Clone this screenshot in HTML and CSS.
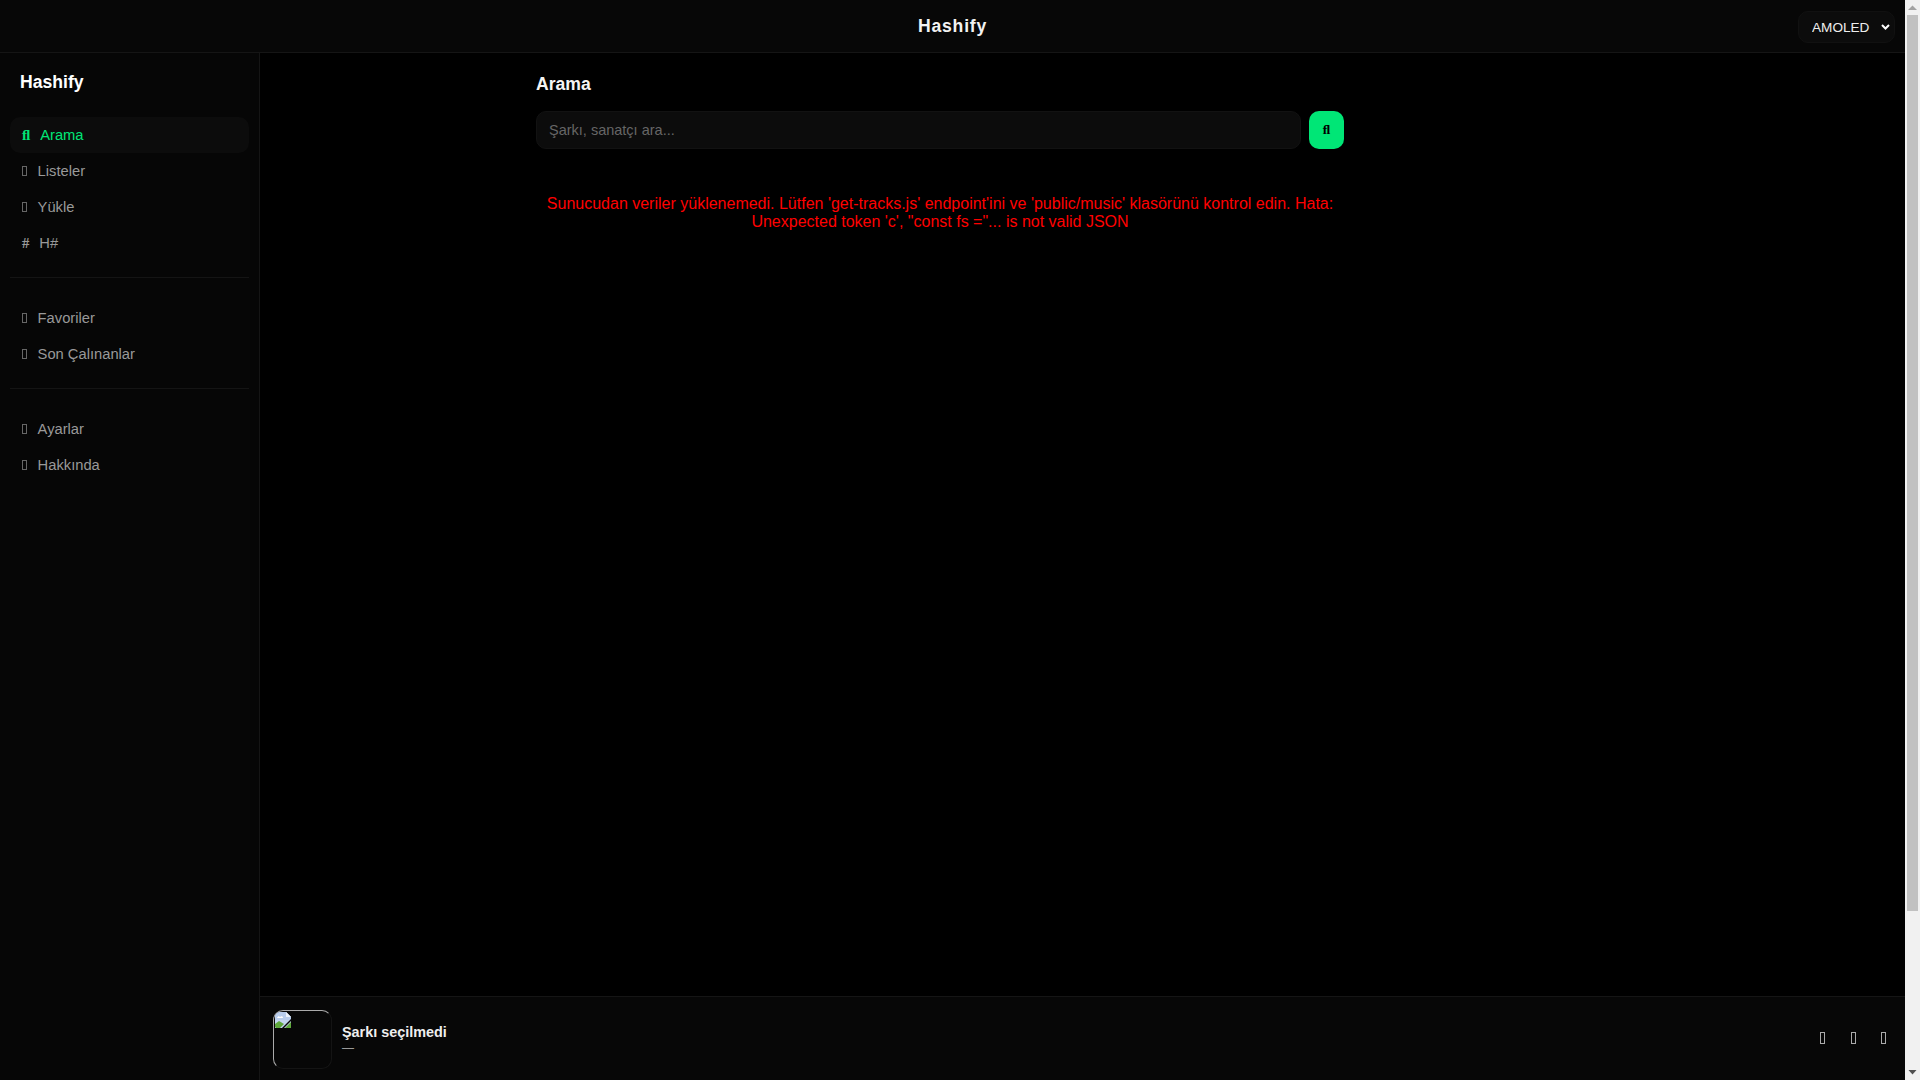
FILE: index.html
```html
<!DOCTYPE html>
<html lang="tr">
<head>
<meta charset="utf-8">
<title>Hashify</title>
<link rel="stylesheet" href="styles.css">
</head>
<body>
<header class="topbar">
  <div class="brand-center">Hashify</div>
  <select class="theme-select"><option>AMOLED</option></select>
</header>
<div class="shell">
  <aside class="sidebar">
    <h2 class="side-title">Hashify</h2>
    <nav class="nav-group">
      <a class="nav-item active"><i class="ico">ﬂ</i>Arama</a>
      <a class="nav-item"><i class="tofu"></i>Listeler</a>
      <a class="nav-item"><i class="tofu"></i>Yükle</a>
      <a class="nav-item"><i class="ico">#</i>H#</a>
    </nav>
    <nav class="nav-group">
      <a class="nav-item"><i class="tofu"></i>Favoriler</a>
      <a class="nav-item"><i class="tofu"></i>Son Çalınanlar</a>
    </nav>
    <nav class="nav-group last">
      <a class="nav-item"><i class="tofu"></i>Ayarlar</a>
      <a class="nav-item"><i class="tofu"></i>Hakkında</a>
    </nav>
  </aside>
  <div class="main-col">
    <main class="content">
      <section class="panel">
        <h3 class="panel-title">Arama</h3>
        <div class="search-row">
          <input class="search-input" type="text" placeholder="Şarkı, sanatçı ara...">
          <button class="search-btn"><i class="ico-btn">ﬂ</i></button>
        </div>
        <p class="error-msg">Sunucudan veriler yüklenemedi. Lütfen 'get-tracks.js' endpoint'ini ve 'public/music' klasörünü kontrol edin. Hata: Unexpected token 'c', "const fs ="... is not valid JSON</p>
      </section>
    </main>
    <footer class="player">
      <div class="cover">
        <svg class="broken" width="16" height="16" viewBox="0 0 16 16">
          <path d="M0 0h11l5 5v11H0z" fill="#c3d5ef"/>
          <path d="M0 0h11l5 5v3H0z" fill="#b9cdec"/>
          <path d="M2 6c1-2 2-2 3-1 1-1 3-1 3 1z" fill="#fff"/>
          <path d="M0 15v-3l4-3 5 3-4 4H1z" fill="#5fa83c"/>
          <path d="M10 16l6-6v6z" fill="#5fa83c"/>
          <path d="M16 7L7 16h2l7-7z" fill="#070707"/>
          <path d="M11 0l5 5h-5z" fill="#eef3fb"/>
        </svg>
      </div>
      <div class="track">
        <div class="track-title">Şarkı seçilmedi</div>
        <div class="track-artist">—</div>
      </div>
      <div class="controls">
        <button class="ctl"></button>
        <button class="ctl"></button>
        <button class="ctl"></button>
      </div>
    </footer>
  </div>
</div>
<div class="scrollbar" aria-hidden="true">
  <svg class="sb-arrow" width="15" height="15" viewBox="0 0 15 15"><path d="M3 10l4.500-4.500L12 10z" fill="#a3a3a3"/></svg>
  <div class="sb-track"><div class="sb-thumb"></div></div>
  <svg class="sb-arrow" width="15" height="15" viewBox="0 0 15 15"><path d="M3.500 5h8l-4 4.500z" fill="#505050"/></svg>
</div>
</body>
</html>
```
FILE: styles.css
```css
* { box-sizing: border-box; }
body { margin: 0; padding-right: 15px; background: #000; color: #fff; font-family: "Liberation Sans", Arial, sans-serif; font-size: 16px; }
.topbar { height: 53px; background: #070707; border-bottom: 1px solid #151515; display: flex; align-items: center; justify-content: center; position: relative; }
.brand-center { font-size: 17.6px; font-weight: 700; letter-spacing: 0.8px; color: #f2f2f2; }
.theme-select { position: absolute; right: 10px; top: 11px; width: 97px; height: 32px; padding: 0 12px 0 13px; appearance: none; background: #0c0c0c url("data:image/svg+xml,%3Csvg xmlns='http://www.w3.org/2000/svg' width='9' height='6' viewBox='0 0 9 6'%3E%3Cpath d='M1 1l3.500 3.500L8 1' fill='none' stroke='%23fff' stroke-width='2'/%3E%3C/svg%3E") no-repeat right 4px center; color: #eee; border: 1px solid #111; border-radius: 10px; font: 13.6px "Liberation Sans", sans-serif; }
.shell { display: flex; height: 1027px; }
.sidebar { width: 260px; flex: none; background: #060606; border-right: 1px solid #151515; padding: 17px 10px 0; }
.side-title { margin: 0 0 23px 10px; font-size: 17.6px; line-height: 24px; font-weight: 700; color: #fff; }
.nav-group { padding-bottom: 16px; margin-bottom: 22px; border-bottom: 1px solid #141414; display: flex; flex-direction: column; }
.nav-group.last { border-bottom: 0; }
.nav-item { height: 36px; display: flex; align-items: center; padding: 0 12px; font-size: 14.72px; color: #999; border-radius: 10px; }
.nav-item.active { background: #0c0c0c; color: #00e676; }
.ico { font-style: normal; font-family: "Liberation Serif", serif; font-weight: 700; margin-right: 10px; }
.tofu { width: 5px; height: 10px; border: 1px solid #666; margin-right: 10.6px; flex: none; }
.main-col { flex: 1; min-width: 0; display: flex; flex-direction: column; }
.content { flex: 1; padding: 19px 0 0 276px; }
.panel { width: 808px; }
.panel-title { margin: 0 0 15px; font-size: 17.6px; line-height: 24px; font-weight: 700; color: #f4f4f4; }
.search-row { display: flex; gap: 8px; height: 38px; }
.search-input { flex: 1; min-width: 0; background: #0c0c0c; border: 1px solid #121212; border-radius: 10px; padding: 0 12px; color: #eee; font: 14.5px "Liberation Sans", sans-serif; }
.search-input::placeholder { color: #666; opacity: 1; }
.search-btn { width: 35px; flex: none; border: 0; border-radius: 10px; background: #00e676; color: #000; padding: 0; }
.ico-btn { font-style: normal; font-family: "Liberation Serif", serif; font-weight: 700; font-size: 13.33px; }
.error-msg { margin: 46px 0 0; text-align: center; color: #f00; font-size: 16px; line-height: 18px; }
.player { height: 84px; flex: none; background: #070707; border-top: 1px solid #151515; display: flex; align-items: center; padding: 0 19px 0 13px; }
.cover { width: 59px; height: 59px; margin-top: 2px; padding: 1px; border-radius: 10px; overflow: hidden; border: 1px solid #141414; border-left-color: #aaa; border-top-color: #aaa; flex: none; }
.broken { display: block; }
.track { margin-left: 10px; flex: 1; }
.track-title { font-size: 14.4px; font-weight: 700; color: #eee; line-height: 18px; }
.track-artist { font-size: 12px; color: #999; line-height: 14px; }
.controls { display: flex; gap: 25.5px; margin-bottom: 1px; }
.ctl { width: 5px; height: 12px; padding: 0; border: 1px solid #aaa; background: transparent; }
.scrollbar { position: fixed; top: 0; right: 0; bottom: 0; width: 15px; background: #f1f1f1; display: flex; flex-direction: column; }
.sb-arrow { display: block; flex: none; }
.sb-track { flex: 1; padding: 0 2px; }
.sb-thumb { height: 896px; background: #c1c1c1; }
```
